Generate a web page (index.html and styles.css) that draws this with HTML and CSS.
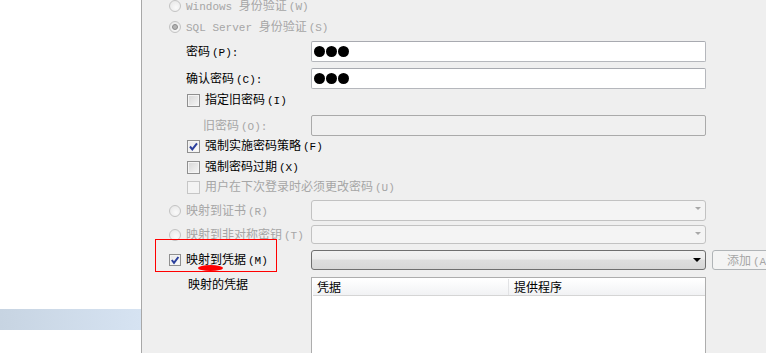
FILE: index.html
```html
<!DOCTYPE html>
<html lang="zh-CN">
<head>
  <meta charset="utf-8">
  <title>登录名 - 新建</title>
  <link rel="stylesheet" href="styles.css">
</head>
<body>

<!-- left side (object tree) -->
<div class="side">
  <div class="band"></div>
</div>

<!-- general page -->
<div class="panel">

  <div class="row r1">
    <div class="lab ind-radio dis"><span class="radio"></span><span><span class="mono">Windows </span>身份验证<span class="key">(W)</span></span></div>
  </div>
  <div class="row r2">
    <div class="lab ind-radio dis"><span class="radio on"></span><span><span class="mono">SQL Server </span>身份验证<span class="key">(S)</span></span></div>
  </div>

  <div class="row field r3">
    <div class="lab ind-label"><span>密码<span class="key">(P):</span></span></div>
    <div class="input"><span class="dot"></span><span class="dot"></span><span class="dot"></span></div>
  </div>
  <div class="row field r4">
    <div class="lab ind-label"><span>确认密码<span class="key">(C):</span></span></div>
    <div class="input"><span class="dot"></span><span class="dot"></span><span class="dot"></span></div>
  </div>

  <div class="row r5">
    <div class="lab ind-check"><span class="check"></span><span>指定旧密码<span class="key">(I)</span></span></div>
  </div>
  <div class="row field r6">
    <div class="lab ind-sub dis"><span>旧密码<span class="key">(O):</span></span></div>
    <div class="input off"></div>
  </div>

  <div class="row r7">
    <div class="lab ind-check"><span class="check on">
      <svg width="11" height="11" viewBox="0 0 11 11"><path d="M2 5.5 L4.3 8.3 L9 2.3" fill="none" stroke="#2b3f9c" stroke-width="2"/></svg>
    </span><span>强制实施密码策略<span class="key">(F)</span></span></div>
  </div>
  <div class="row r8">
    <div class="lab ind-check"><span class="check"></span><span>强制密码过期<span class="key">(X)</span></span></div>
  </div>
  <div class="row r9">
    <div class="lab ind-check dis"><span class="check off"></span><span>用户在下次登录时必须更改密码<span class="key">(U)</span></span></div>
  </div>

  <div class="row field r10">
    <div class="lab ind-radio dis"><span class="radio"></span><span>映射到证书<span class="key">(R)</span></span></div>
    <div class="combo off"><span class="arrow"></span></div>
  </div>
  <div class="row field r11">
    <div class="lab ind-radio dis"><span class="radio"></span><span>映射到非对称密钥<span class="key">(T)</span></span></div>
    <div class="combo off"><span class="arrow"></span></div>
  </div>
  <div class="row field r12">
    <div class="lab ind-radio"><span class="check on small">
      <svg width="10" height="10" viewBox="0 0 10 10"><path d="M1.8 5 L4 7.8 L8.4 2" fill="none" stroke="#2b3f9c" stroke-width="2"/></svg>
    </span><span>映射到凭据<span class="key">(M)</span></span></div>
    <div class="combo"><span class="arrow"></span></div>
    <div class="btn">添加<span class="key">(A)</span></div>
  </div>

  <div class="row list-row">
    <div class="lab ind-list">映射的凭据</div>
    <div class="list">
      <div class="list-head">
        <div class="col c1">凭据</div>
        <div class="col c2">提供程序</div>
      </div>
    </div>
  </div>

  <!-- annotation drawn over the screenshot -->
  <div class="mark"></div>
  <div class="smudge"></div>
</div>

</body>
</html>
```

FILE: styles.css
```css
body {
  margin: 0;
  width: 766px;
  height: 353px;
  overflow: hidden;
  display: flex;
  font-family: "Noto Sans CJK SC", "Liberation Sans", sans-serif;
  font-size: 12px;
  color: #000;
  background: #fff;
}

.side {
  width: 141px;
  flex: none;
  padding-top: 309px;
  background: #fff;
}

.band {
  height: 21px;
  background: linear-gradient(90deg, #c7d4e2, #d6e3f2);
}

.panel {
  position: relative;
  flex: 1;
  background: #efefef;
  border-left: 1px solid #a8a8a8;
}

.row {
  display: flex;
  align-items: center;
  height: 20px;
}

.r1 { height: 12px; }
.r2 { margin-top: 5px; }
.r3 { margin-top: 4px; }
.r4 { margin-top: 6px; }
.r5 { margin-top: 1px; }
.r6 { margin-top: 5px; }
.r8 { margin-top: 1px; }
.r10 { margin-top: 3px; }
.r11 { margin-top: 4px; height: 19px; }
.r12 { margin-top: 5px; }
.field { height: 21px; }
.r11.field { height: 19px; }

.lab {
  width: 169px;
  flex: none;
  box-sizing: border-box;
  display: flex;
  align-items: center;
  white-space: nowrap;
  line-height: 12px;
}

.ind-radio { padding-left: 27px; }
.ind-label { padding-left: 44px; }
.ind-check { padding-left: 45px; }
.ind-sub { padding-left: 61px; }
.ind-list { padding-left: 46px; }

.dis { color: #a6a6a6; }

.mono {
  font-family: "Liberation Mono", monospace;
  font-size: 11px;
}

/* access keys, drawn narrow like the system font */
.key {
  font-family: "Liberation Mono", monospace;
  font-size: 11px;
  margin-left: 2px;
}

/* radio buttons */
.radio {
  width: 10px;
  height: 10px;
  flex: none;
  margin-right: 5px;
  border: 1px solid #c3c3c3;
  border-radius: 50%;
  background: radial-gradient(circle at 60% 65%, #fafafa, #e4e4e4);
  position: relative;
}

.radio.on::after {
  content: "";
  position: absolute;
  left: 2px;
  top: 2px;
  width: 4px;
  height: 4px;
  border: 1px solid #8c8c8c;
  border-radius: 50%;
  background: #b4b4b4;
}

/* check boxes */
.check {
  width: 11px;
  height: 11px;
  flex: none;
  margin-right: 5px;
  border: 1px solid #8f8f8f;
  background: linear-gradient(135deg, #d6d6d6, #f6f6f6);
  box-shadow: inset 0 0 0 1px #f4f4f4;
  display: flex;
  align-items: center;
  justify-content: center;
}

.check.on {
  background: linear-gradient(135deg, #e6e6e6, #fdfdfd);
}

.check.small {
  width: 10px;
  height: 10px;
}

.check.off {
  border-color: #c6c6c6;
  background: #f3f3f3;
  box-shadow: none;
}

/* text boxes */
.input {
  width: 395px;
  height: 21px;
  box-sizing: border-box;
  border: 1px solid #b5b7bc;
  border-top-color: #a8aab0;
  border-radius: 2px;
  background: #fff;
  display: flex;
  align-items: center;
  padding-left: 2px;
  gap: 1px;
}

.input.off {
  background: #f0f0f0;
  border-color: #aaaaaa;
}

.dot {
  width: 11px;
  height: 11px;
  border-radius: 50%;
  background: #000;
}

/* combo boxes */
.combo {
  position: relative;
  width: 395px;
  height: 20px;
  box-sizing: border-box;
  border: 1px solid #6f6f6f;
  border-radius: 3px;
  background: linear-gradient(#f2f2f2 0%, #ececec 45%, #dedede 50%, #d7d7d7 100%);
}

.combo.off {
  height: 100%;
  border-color: #c2c2c2;
  background: #f4f4f4;
}

.arrow {
  position: absolute;
  right: 4px;
  top: 7px;
  width: 0;
  height: 0;
  border-left: 4px solid transparent;
  border-right: 4px solid transparent;
  border-top: 4px solid #000;
}

.combo.off .arrow {
  top: 6px;
  border-top-color: #a8a8a8;
  border-left-width: 3px;
  border-right-width: 3px;
  border-top-width: 3px;
}

.btn {
  margin-left: 6px;
  width: 75px;
  height: 20px;
  flex: none;
  box-sizing: border-box;
  border: 1px solid #b0b4b7;
  border-radius: 3px;
  background: #f4f4f4;
  color: #a6a6a6;
  padding-left: 14px;
  line-height: 18px;
  white-space: nowrap;
}

/* list of mapped credentials */
.list-row {
  margin-top: 7px;
  height: auto;
  align-items: flex-start;
}

.list-row .lab {
  margin-top: 0;
  line-height: 14px;
}

.list {
  width: 395px;
  height: 90px;
  box-sizing: border-box;
  border: 1px solid #adadad;
  background: #fff;
  padding: 1px 0 0 1px;
}

.list-head {
  display: flex;
  height: 16px;
  border-bottom: 1px solid #d5d5d5;
  background: linear-gradient(#ffffff, #f1f2f4);
  line-height: 15px;
}

.col {
  box-sizing: border-box;
  padding-left: 4px;
}

.c1 {
  width: 196px;
  border-right: 1px solid #e2e3e5;
}

.c2 {
  flex: 1;
  padding-left: 5px;
}

/* red annotation */
.mark {
  position: absolute;
  left: 13px;
  top: 239px;
  width: 120px;
  height: 31px;
  border: 1px solid #ff0000;
}

.smudge {
  position: absolute;
  left: 56px;
  top: 265px;
  width: 25px;
  height: 6px;
  border-radius: 50%;
  background: #ff0000;
}
```
